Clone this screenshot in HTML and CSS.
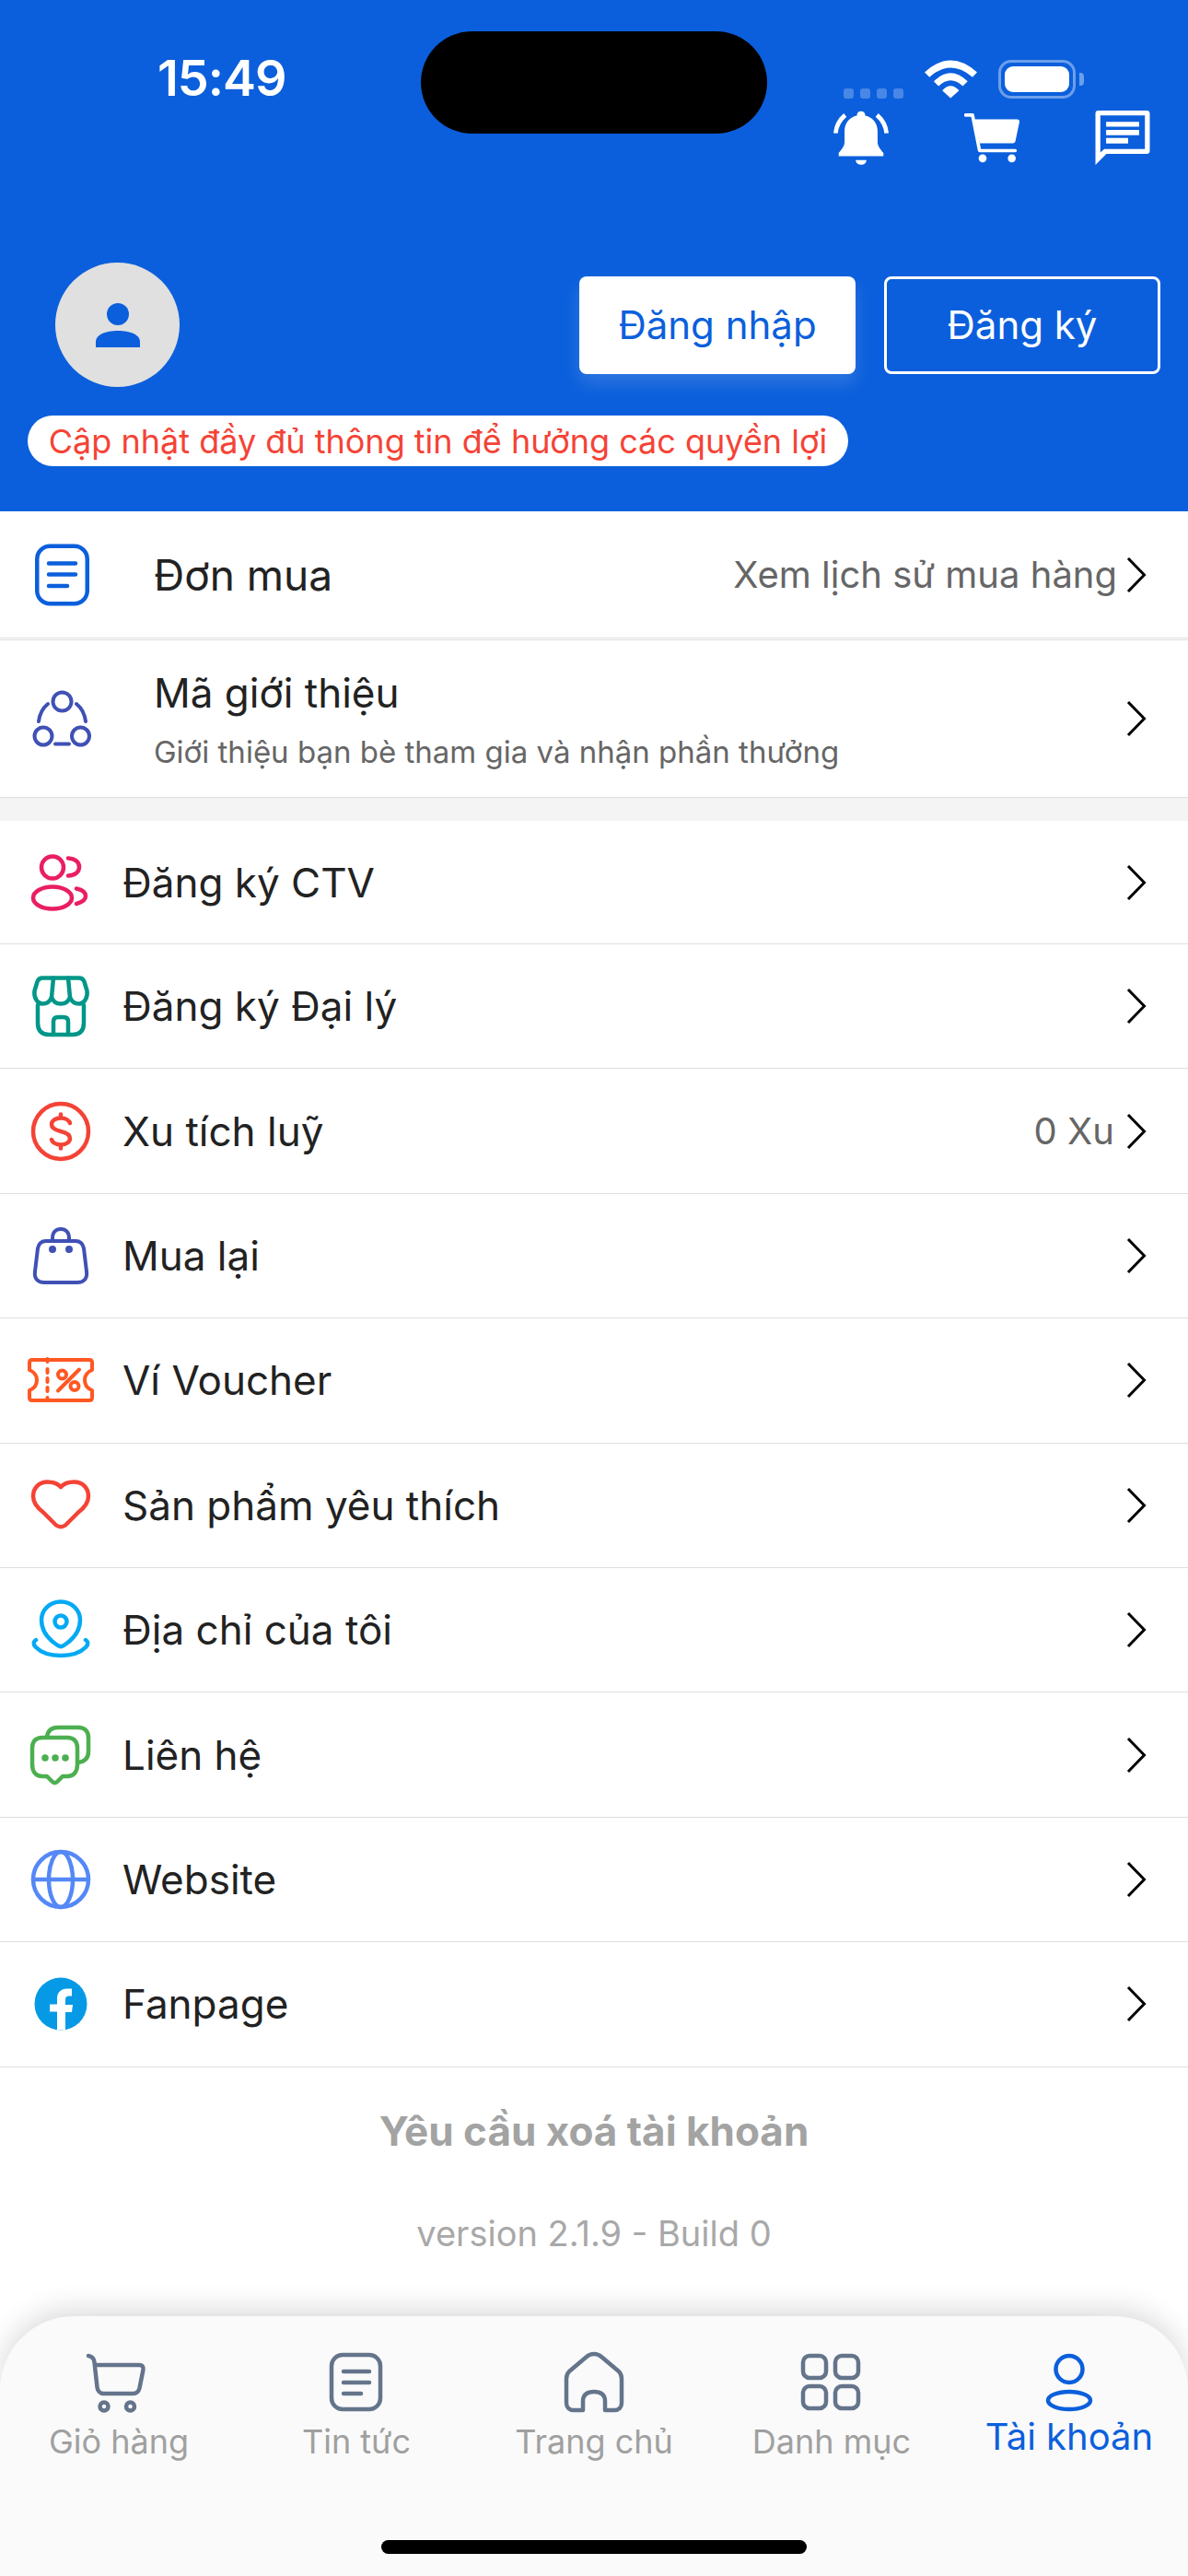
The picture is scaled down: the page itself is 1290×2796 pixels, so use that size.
FILE: index.html
```html
<!DOCTYPE html>
<html lang="vi">
<head>
  <meta charset="UTF-8">
  <title>Tài khoản</title>
  <meta name="viewport" content="width=device-width, initial-scale=1.0" />
  <link rel="stylesheet" href="styles.css">
</head>
<body>
<div class="page">

  <header class="hero">
    <div class="island"></div>

    <div class="statusbar">
      <span class="clock">15:49</span>
      <div class="sys-icons">
        <div class="signal"><i></i><i></i><i></i><i></i></div>
        <svg class="wifi" viewBox="0 0 172 124">
          <path d="M0 39Q85 -39 172 39L157 55Q85 -7 16 55z"/>
          <path d="M30 69Q85 15 141 69L125 85Q85 47 46 85z"/>
          <path d="M58 99Q85 69 113 99L85 124z"/>
        </svg>
        <div class="battery"><div class="battery-level"></div></div>
        <div class="battery-nub"></div>
      </div>
    </div>

    <div class="actions">
      <svg class="action-icon" viewBox="0 0 179 175">
        <path d="M89 2c-8 0-13 6-13 14-24 5-40 25-40 50v35c0 12-6 20-19 36v10h145v-10c-13-16-19-24-19-36V66c0-25-16-45-40-50 0-8-5-14-14-14z"/>
        <path d="M72 160h35c0 9-8 15-17 15s-18-6-18-15z"/>
        <path class="bell-wave" d="M7 73C9 48 22 28 38 14M172 73C170 48 157 28 141 14"/>
      </svg>
      <svg class="action-icon" viewBox="0 0 180 160">
        <path class="cart-line" d="M5 6H27L50 122H166"/>
        <path d="M33 20H172q8 0 8 8L167 90q-1 8-9 8H50z"/>
        <circle cx="60" cy="147" r="13"/>
        <circle cx="155" cy="147" r="13"/>
      </svg>
      <svg class="action-icon" viewBox="0 0 178 178">
        <path fill-rule="evenodd" d="M10 0H168q10 0 10 10V132q0 10-10 10H36L0 178V10Q0 0 10 0zM16 16V137L29 126H162V16z"/>
        <path d="M35 37H143V53H35zM35 63H143V81H35zM35 90H107V108H35z"/>
      </svg>
    </div>

    <div class="account">
      <div class="avatar">
        <svg class="avatar-person" viewBox="0 0 48 48">
          <circle cx="24" cy="12" r="12"/>
          <path d="M0 48V42C0 34 11 30 24 30s24 4 24 12v6z"/>
        </svg>
      </div>
      <div class="auth-buttons">
        <a class="btn btn-solid">Đăng nhập</a>
        <a class="btn btn-outline">Đăng ký</a>
      </div>
    </div>

    <div class="notice">Cập nhật đầy đủ thông tin để hưởng các quyền lợi</div>
  </header>

  <main>
    <a class="row row-order">
      <svg class="ico ico-primary" viewBox="0 0 72 72">
        <rect x="10.25" y="4.75" width="54.5" height="62.5" rx="14"/>
        <path d="M23 23.5H52M23 35.5H52M23 48H43"/>
      </svg>
      <span class="row-title row-title-lg">Đơn mua</span>
      <span class="row-note">Xem lịch sử mua hàng</span>
      <svg class="chevron" viewBox="0 0 24 42"><path d="M3 3L20.5 21L3 39"/></svg>
    </a>

    <a class="row row-invite">
      <svg class="ico ico-indigo ico-thin" viewBox="0 0 72 72">
        <circle cx="37.5" cy="17.5" r="10"/>
        <circle cx="17" cy="55" r="9.5"/>
        <circle cx="57.5" cy="55" r="9.5"/>
        <path d="M12 39C13 31 17 24 22 20M63 39C62 31 58 24 53 20M30 63.5H45"/>
      </svg>
      <div class="row-text">
        <span class="row-title">Mã giới thiệu</span>
        <span class="row-sub">Giới thiệu bạn bè tham gia và nhận phần thưởng</span>
      </div>
      <svg class="chevron" viewBox="0 0 24 42"><path d="M3 3L20.5 21L3 39"/></svg>
    </a>

    <div class="menu-gap"></div>

    <a class="row row-first">
      <svg class="ico ico-pink" viewBox="0 0 72 72">
        <circle cx="27" cy="19.5" r="12"/>
        <ellipse cx="27" cy="52.5" rx="21" ry="12"/>
        <path d="M44 9.5C52 10 56 14 56 19S52 28 44 28.5M53 42.5C60 44 63 47 63 50.5S60 57 53 59"/>
      </svg>
      <span class="row-title">Đăng ký CTV</span>
      <svg class="chevron" viewBox="0 0 24 42"><path d="M3 3L20.5 21L3 39"/></svg>
    </a>

    <a class="row">
      <svg class="ico ico-teal" viewBox="0 0 72 72">
        <path d="M16 5.5h40c3 0 4.500 1.500 5.500 4l3 10c1 7-3 14-8.500 14-5 0-8.500-3-10-7-1.500 4-5 7-10 7s-8.500-3-10-7c-1.500 4-5 7-10 7-5.500 0-9.500-7-8.500-14l3-10c1-2.500 2.500-4 5.500-4z"/>
        <path d="M26 26.500L28 5.500M46 26.500L44 5.500"/>
        <path d="M11 35v19c0 9 4 13 12 13h26c8 0 12-4 12-13V35"/>
        <path d="M28 67V53c0-4 2-5 5-5h6c3 0 5 1 5 5v14"/>
      </svg>
      <span class="row-title">Đăng ký Đại lý</span>
      <svg class="chevron" viewBox="0 0 24 42"><path d="M3 3L20.5 21L3 39"/></svg>
    </a>

    <a class="row">
      <svg class="ico ico-red" viewBox="0 0 72 72">
        <circle cx="36" cy="36" r="30"/>
        <path d="M46 27c-1-3-5-5.500-10-5.500-6 0-10 3-10 7s4 6 10 7.500 10 3.500 10 7.500-4 7-10 7c-5 0-9-2.500-10-5.500M36 17.500v4M36 50.500v4"/>
      </svg>
      <span class="row-title">Xu tích luỹ</span>
      <span class="row-note">0 Xu</span>
      <svg class="chevron chevron-far" viewBox="0 0 24 42"><path d="M3 3L20.5 21L3 39"/></svg>
    </a>

    <a class="row">
      <svg class="ico ico-indigo ico-thin" viewBox="0 0 72 72">
        <path d="M20 20h32c5 0 8 3 9 8l3 25c1 8-3 12-10 12H18c-7 0-11-4-10-12l3-25c1-5 4-8 9-8z"/>
        <path d="M27 20v-3c0-7 4-10 9-10s9 3 9 10v3"/>
        <circle class="ico-dot" cx="27" cy="29" r="2"/>
        <circle class="ico-dot" cx="45" cy="29" r="2"/>
      </svg>
      <span class="row-title">Mua lại</span>
      <svg class="chevron" viewBox="0 0 24 42"><path d="M3 3L20.5 21L3 39"/></svg>
    </a>

    <a class="row">
      <svg class="ico ico-orange ico-thin" viewBox="0 0 72 72">
        <path d="M5 14h62c2 0 3 1 3 3v8c-5 2-8 6-8 11s3 9 8 11v8c0 2-1 3-3 3H5c-2 0-3-1-3-3v-8c5-2 8-6 8-11s-3-9-8-11v-8c0-2 1-3 3-3z"/>
        <path d="M21.500 13v3M21.500 24v4M21.500 34v4M21.500 44v4M21.500 55v3"/>
        <path d="M33 47.500L56 24.500"/>
        <circle cx="37.500" cy="30" r="4.500"/>
        <circle cx="51" cy="42.500" r="4.500"/>
      </svg>
      <span class="row-title">Ví Voucher</span>
      <svg class="chevron" viewBox="0 0 24 42"><path d="M3 3L20.5 21L3 39"/></svg>
    </a>

    <a class="row">
      <svg class="ico ico-red" viewBox="0 0 72 72">
        <path d="M36 16C32.500 12 27.500 10.500 21.500 10.500 12.500 10.500 6 17 6 26c0 7.500 5 13 11 17.500l14 14c3 2 7 2 10 0l14-14c6-4.500 11-10 11-17.500 0-9-6.500-15.500-15.500-15.500-6 0-11 1.500-14.500 5.500z"/>
      </svg>
      <span class="row-title">Sản phẩm yêu thích</span>
      <svg class="chevron" viewBox="0 0 24 42"><path d="M3 3L20.5 21L3 39"/></svg>
    </a>

    <a class="row">
      <svg class="ico ico-sky" viewBox="0 0 72 72">
        <path d="M36 5.500c-12 0-21 9-21 20 0 12 8 21 17 27 2.500 2 5.500 2 8 0 9-6 17-15 17-27 0-11-9-20-21-20z"/>
        <circle cx="36" cy="27" r="6.500"/>
        <path d="M9 47c-3 2-3 5 0 8 6 6 17 9 27 9s21-3 27-9c3-3 3-6 0-8"/>
      </svg>
      <span class="row-title">Địa chỉ của tôi</span>
      <svg class="chevron" viewBox="0 0 24 42"><path d="M3 3L20.5 21L3 39"/></svg>
    </a>

    <a class="row">
      <svg class="ico ico-green" viewBox="0 0 72 72">
        <path d="M16 17h27c7 0 11 4 11 11v18c0 8-4 13-11 13h-5l-6 6c-1.500 1.500-3.500 1.500-5 0l-6-6h-5C9 59 5 54 5 46V28c0-7 4-11 11-11z"/>
        <path d="M21 16c1-7 5-10 12-10h22c7 0 11 4 11 11v15c0 7-4 11-11 12"/>
        <circle class="ico-dot" cx="19" cy="39" r="1.500"/>
        <circle class="ico-dot" cx="30" cy="39" r="1.500"/>
        <circle class="ico-dot" cx="41" cy="39" r="1.500"/>
      </svg>
      <span class="row-title">Liên hệ</span>
      <svg class="chevron" viewBox="0 0 24 42"><path d="M3 3L20.5 21L3 39"/></svg>
    </a>

    <a class="row">
      <svg class="ico ico-globe" viewBox="0 0 72 72">
        <circle cx="36" cy="36" r="30"/>
        <ellipse cx="36" cy="36" rx="13" ry="30"/>
        <path d="M6 36H66"/>
      </svg>
      <span class="row-title">Website</span>
      <svg class="chevron" viewBox="0 0 24 42"><path d="M3 3L20.5 21L3 39"/></svg>
    </a>

    <a class="row">
      <svg class="ico" viewBox="0 0 72 72">
        <circle class="fb-disc" cx="36" cy="36" r="28.500"/>
        <path class="fb-mark" d="M32 64.300V44.500h-8V36.500h8v-6c0-7 4-11 11-11h5v8h-3c-3 0-4 1.500-4 4v5.500h8l-1 8h-7V64.300z"/>
      </svg>
      <span class="row-title">Fanpage</span>
      <svg class="chevron" viewBox="0 0 24 42"><path d="M3 3L20.5 21L3 39"/></svg>
    </a>
  </main>

  <section class="foot">
    <a class="delete-link">Yêu cầu xoá tài khoản</a>
    <span class="version">version 2.1.9 - Build 0</span>
  </section>

  <nav class="tabbar">
    <div class="tabs">
      <a class="tab">
        <svg class="tab-icon" viewBox="0 0 72 68">
          <path d="M3 5c4 .5 6 3 6.500 7l3 27c.5 4 3 7 7 7h32c4 0 6-2 7-6l4-20c.5-3-1-5-4-5H10"/>
          <circle cx="20" cy="60" r="4.500"/>
          <circle cx="48.500" cy="60" r="4.500"/>
        </svg>
        <span class="tab-label">Giỏ hàng</span>
      </a>
      <a class="tab">
        <svg class="tab-icon" viewBox="0 0 72 68">
          <rect x="9" y="4" width="53" height="59" rx="12"/>
          <path d="M22 22H50M22 34H50M22 46H41"/>
        </svg>
        <span class="tab-label">Tin tức</span>
      </a>
      <a class="tab">
        <svg class="tab-icon" viewBox="0 0 72 68">
          <path d="M14 64c-5 0-8-3-8-8V30c0-3 1-6 3-8L28 6c4.500-4 11.500-4 16 0l19 16c2 2 3 5 3 8v26c0 5-3 8-8 8H48V54c0-7-5-10-12-10s-12 3-12 10v10z"/>
        </svg>
        <span class="tab-label">Trang chủ</span>
      </a>
      <a class="tab">
        <svg class="tab-icon" viewBox="0 0 72 68">
          <rect x="5" y="5" width="25" height="24" rx="7"/>
          <rect x="40" y="5" width="25" height="24" rx="7"/>
          <rect x="5" y="38" width="25" height="24" rx="7"/>
          <rect x="40" y="38" width="25" height="24" rx="7"/>
        </svg>
        <span class="tab-label">Danh mục</span>
      </a>
      <a class="tab tab-active">
        <svg class="tab-icon" viewBox="0 0 72 68">
          <circle cx="36" cy="19.500" r="14.500"/>
          <ellipse cx="36" cy="53.500" rx="23" ry="9.500"/>
        </svg>
        <span class="tab-label">Tài khoản</span>
      </a>
    </div>
    <div class="home-bar"></div>
  </nav>

</div>
</body>
</html>
```

FILE: styles.css
```css
* {
  box-sizing: border-box;
}

body {
  margin: 0;
  font-family: Inter, "Noto Sans", sans-serif;
  background: #fff;
  color: #222;
}

.page {
  width: 1290px;
  min-height: 2796px;
  display: flex;
  flex-direction: column;
}

/* blue top block */
.hero {
  position: relative;
  height: 555px;
  background: #0b5fdc;
  color: #fff;
}

.island {
  position: absolute;
  left: 457px;
  top: 34px;
  width: 376px;
  height: 111px;
  border-radius: 56px;
  background: #000;
}

.statusbar {
  display: flex;
  justify-content: space-between;
  align-items: flex-end;
  height: 107px;
  padding-left: 171px;
  padding-right: 113px;
}

.clock {
  font-size: 54px;
  font-weight: 600;
  line-height: 44px;
  letter-spacing: -1px;
}

.sys-icons {
  display: flex;
  align-items: flex-end;
}

.signal {
  display: flex;
  gap: 7px;
  margin-right: 23px;
}

.signal i {
  width: 11px;
  height: 11px;
  border-radius: 3px;
  background: rgba(255, 255, 255, 0.25);
}

.wifi {
  width: 57px;
  height: 42px;
  fill: #fff;
  margin-right: 23px;
}

.battery {
  width: 84px;
  height: 42px;
  padding: 4px;
  border: 3px solid rgba(255, 255, 255, 0.4);
  border-radius: 14px;
}

.battery-level {
  height: 100%;
  border-radius: 9px;
  background: #fff;
}

.battery-nub {
  width: 5px;
  height: 14px;
  margin: 0 0 14px 4px;
  border-radius: 0 4px 4px 0;
  background: rgba(255, 255, 255, 0.4);
}

.actions {
  display: flex;
  justify-content: flex-end;
  gap: 82px;
  margin-top: 13px;
  padding-right: 41px;
}

.action-icon {
  width: 60px;
  height: 59px;
  fill: #fff;
}

.bell-wave {
  fill: none;
  stroke: #fff;
  stroke-width: 14;
}

.cart-line {
  fill: none;
  stroke: #fff;
  stroke-width: 11;
  stroke-linecap: round;
  stroke-linejoin: round;
}

.account {
  display: flex;
  align-items: center;
  justify-content: space-between;
  margin-top: 106px;
  padding: 0 30px 0 60px;
}

.avatar {
  width: 135px;
  height: 135px;
  display: flex;
  align-items: center;
  justify-content: center;
  border-radius: 50%;
  background: #e0e0e0;
}

.avatar-person {
  width: 48px;
  height: 48px;
  fill: #0b5fdc;
}

.auth-buttons {
  display: flex;
  gap: 31px;
}

.btn {
  width: 300px;
  height: 106px;
  display: flex;
  align-items: center;
  justify-content: center;
  border-radius: 8px;
  font-size: 42px;
}

.btn-solid {
  background: #fff;
  color: #0b5fdc;
  box-shadow: 0 10px 20px rgba(255, 255, 255, 0.15);
}

.btn-outline {
  border: 3px solid #fff;
  color: #fff;
}

.notice {
  width: 891px;
  height: 55px;
  margin: 31px 0 0 30px;
  display: flex;
  align-items: center;
  justify-content: center;
  border-radius: 28px;
  background: #fff;
  color: #f44336;
  font-size: 36px;
}

/* menu rows */
.row {
  display: flex;
  align-items: center;
  height: 135.4px;
  padding: 0 44px 0 30px;
  border-bottom: 1px solid #dedede;
}

.row-order {
  height: 138px;
}

.row-invite {
  height: 172px;
  margin-top: 1px;
  border-top: 1px solid #dedede;
}

.row-first {
  height: 134px;
}

.menu-gap {
  height: 25px;
  background: #f4f4f4;
}

.ico {
  width: 72px;
  height: 72px;
  flex: none;
  margin-right: 31px;
  fill: none;
  stroke: currentColor;
  stroke-width: 4.5;
  stroke-linecap: round;
  stroke-linejoin: round;
}

.row-order .ico,
.row-invite .ico {
  margin-right: 65px;
}

.ico-thin {
  stroke-width: 4;
}

.ico-dot {
  fill: currentColor;
}

.ico-primary { color: #0b5fdc; }
.ico-indigo { color: #3f51b5; }
.ico-pink { color: #e91e63; }
.ico-teal { color: #009688; }
.ico-red { color: #f44336; }
.ico-orange { color: #ff5722; }
.ico-sky { color: #03a9f4; }
.ico-green { color: #4caf50; }
.ico-globe { color: #5488f7; }

.fb-disc {
  fill: #069ae6;
  stroke: none;
}

.fb-mark {
  fill: #fff;
  stroke: none;
}

.row-text {
  display: flex;
  flex-direction: column;
  gap: 17px;
}

.row-title {
  font-size: 44px;
  line-height: 54px;
  color: #222;
}

.row-title-lg {
  font-size: 46px;
}

.row-sub {
  font-size: 33px;
  line-height: 40px;
  color: #666;
}

.row-note {
  margin-left: auto;
  font-size: 40px;
  color: #666;
}

.chevron {
  width: 24px;
  height: 42px;
  flex: none;
  margin-left: auto;
  fill: none;
  stroke: #000;
  stroke-width: 3;
}

.row-note + .chevron {
  margin-left: 9px;
}

.row-note + .chevron-far {
  margin-left: 12px;
}

/* delete link and version */
.foot {
  flex: 1;
  display: flex;
  flex-direction: column;
  align-items: center;
  padding-top: 39px;
}

.delete-link {
  font-size: 44px;
  font-weight: 700;
  line-height: 60px;
  color: #a3a3a3;
}

.version {
  margin-top: 56px;
  font-size: 38px;
  line-height: 50px;
  color: #a8a8a8;
}

/* bottom tabs */
.tabbar {
  height: 282px;
  padding-top: 38px;
  border-radius: 80px 80px 0 0;
  background: #fafafa;
  box-shadow: 0 -8px 30px rgba(0, 0, 0, 0.14);
}

.tabs {
  display: flex;
}

.tab {
  flex: 1;
  display: flex;
  flex-direction: column;
  align-items: center;
}

.tab-icon {
  width: 72px;
  height: 68px;
  fill: none;
  stroke: #64748b;
  stroke-width: 4.5;
  stroke-linecap: round;
  stroke-linejoin: round;
}

.tab-label {
  margin-top: 5px;
  font-size: 36px;
  line-height: 50px;
  color: #a0a0a0;
}

.tab-active .tab-icon {
  stroke: #0b5fdc;
}

.tab-active .tab-label {
  margin-top: 0;
  font-size: 40px;
  color: #0b5fdc;
}

.home-bar {
  width: 462px;
  height: 15px;
  margin: 82px auto 0;
  border-radius: 8px;
  background: #000;
}
```
